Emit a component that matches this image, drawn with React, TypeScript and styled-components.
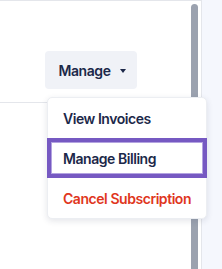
import React from "react";
import styled, { createGlobalStyle } from "styled-components";

const Global = createGlobalStyle`
	html, body {
		margin: 0;
		padding: 0;
		height: 100%;
		background: #f5f7fd;
		font-family: Inter, "Noto Sans", sans-serif;
	}
	#root {
		height: 100%;
	}
`;

const Page = styled.div`
	height: 269px;
	display: flex;
	overflow: hidden;
`;

const Panel = styled.div`
	position: relative;
	width: 202px;
	height: 100%;
	background: #ffffff;
	border-top: 1px solid #e4e6eb;
	border-right: 1px solid #e4e6eb;
	display: flex;
	box-sizing: border-box;
`;

const Content = styled.div`
	flex: 1;
	display: flex;
	flex-direction: column;
`;

const Header = styled.div`
	height: 102px;
	display: flex;
	justify-content: flex-end;
	align-items: flex-start;
	padding: 50px 54px 0 0;
	box-sizing: border-box;
	border-bottom: 1px solid #e4e6eb;
`;

const ManageButton = styled.button`
	width: 92px;
	height: 38px;
	border: none;
	border-radius: 4px;
	background: #f0f2f7;
	color: #1c2849;
	font-family: inherit;
	font-size: 14px;
	font-weight: 600;
	letter-spacing: -0.4px;
	display: flex;
	align-items: center;
	justify-content: center;
	gap: 9px;
	padding: 0 0 0 2px;
	cursor: pointer;
`;

const Caret = styled.span`
	width: 0;
	height: 0;
	border-left: 3.5px solid transparent;
	border-right: 3.5px solid transparent;
	border-top: 4px solid #1c2849;
	margin-top: 1px;
`;

const Track = styled.div`
	width: 10px;
	padding-top: 3px;
	display: flex;
`;

const Thumb = styled.div`
	width: 7px;
	height: 100%;
	background: #9ba2af;
	border-radius: 4px 4px 0 0;
`;

const Menu = styled.ul`
	position: absolute;
	top: 96px;
	left: 47px;
	width: 160px;
	margin: 0;
	padding: 0;
	list-style: none;
	background: #ffffff;
	border: 1px solid #eceef2;
	border-radius: 5px;
	box-shadow: 0 2px 6px rgba(30, 40, 70, 0.12);
	box-sizing: border-box;
	z-index: 2;
`;

const Item = styled.li<{ $danger?: boolean; $focused?: boolean }>`
	height: 40px;
	display: flex;
	align-items: center;
	font-size: 14px;
	font-weight: 600;
	letter-spacing: -0.45px;
	color: ${(p) => (p.$danger ? "#e0361d" : "#1c2849")};
	box-shadow: ${(p) =>
		p.$focused ? "inset 0 0 0 4px #7659c2, inset 0 0 0 5px #b3a3e0" : "none"};
	margin: ${(p) => (p.$focused ? "0 -1px" : "0")};
	padding-left: ${(p) => (p.$focused ? "16px" : "15px")};
`;

export default function App() {
	return (
		<Page>
			<Global />
			<Panel>
				<Content>
					<Header>
						<ManageButton>
							Manage
							<Caret />
						</ManageButton>
					</Header>
				</Content>
				<Track>
					<Thumb />
				</Track>
				<Menu>
					<Item>View Invoices</Item>
					<Item $focused>Manage Billing</Item>
					<Item $danger>Cancel Subscription</Item>
				</Menu>
			</Panel>
		</Page>
	);
}
